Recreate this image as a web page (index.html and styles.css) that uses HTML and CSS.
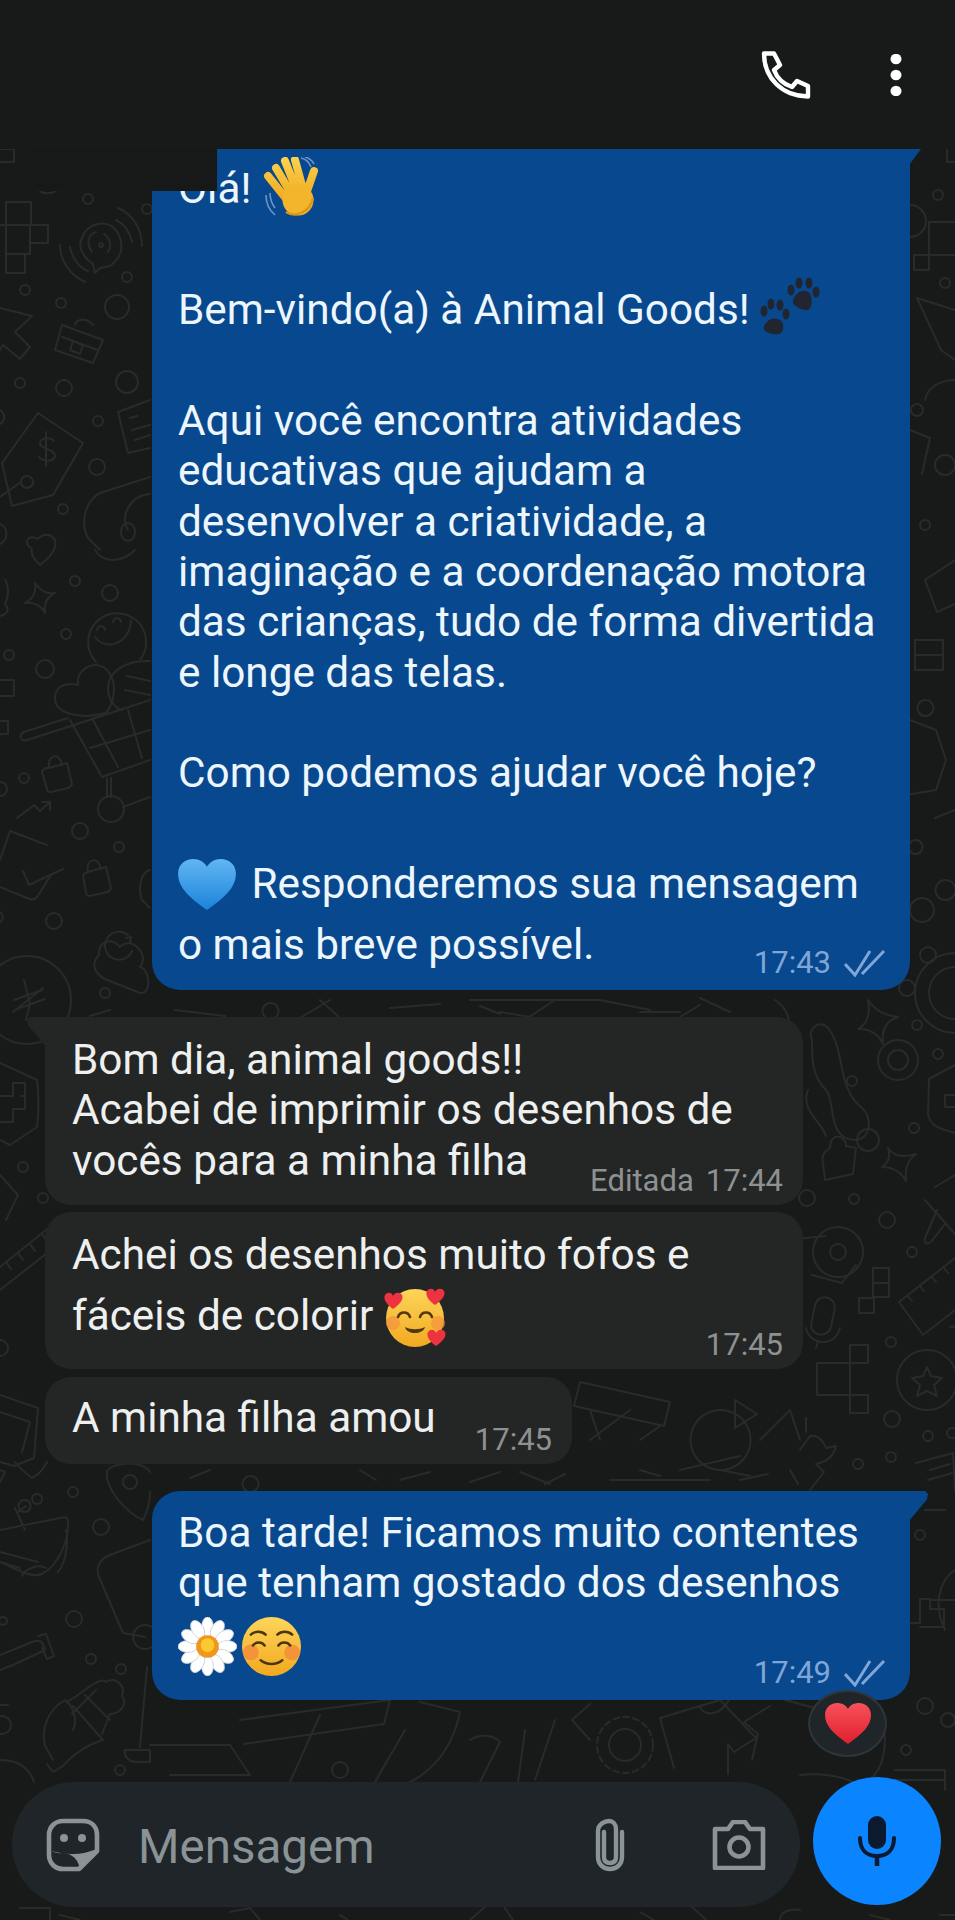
FILE: index.html
```html
<!DOCTYPE html>
<html lang="pt">
<head>
  <meta charset="UTF-8">
  <meta name="viewport" content="width=device-width, initial-scale=1.0">
  <title>Animal Goods</title>
  <link rel="stylesheet" href="styles.css">
</head>
<body>
  <header class="topbar">
    <svg class="top-icon" width="50" height="48" viewBox="0 0 50 48" aria-hidden="true"><path d="M3 2.500 L13 2.500 L19 14 L13 19 C16 27 22 33 31 36 L36 30 L47 35 L47 45.500 C21 45 3 27 3 2.500 Z" fill="none" stroke="#fff" stroke-width="4.400" stroke-linejoin="round"/></svg>
    <svg class="top-icon" width="12" height="42" viewBox="0 0 12 42" aria-hidden="true"><ellipse cx="6" cy="5" rx="5.500" ry="5.200"/><ellipse cx="6" cy="21" rx="5.500" ry="5.200"/><ellipse cx="6" cy="37" rx="5.500" ry="5.200"/></svg>
  </header>

  <main class="chat">
    <!-- doodle wallpaper, coordinates are page coordinates -->
    <svg class="wallpaper" width="955" height="1771" viewBox="0 149 955 1771" aria-hidden="true">
      <g fill="none" stroke="#292b2b" stroke-width="2" stroke-linecap="round" stroke-linejoin="round">
        <!-- left margin, top -->
        <path d="M0 149h14v13h-14M947 149v13h8M40 191c3 3 12 3 16 0"/>
        <path d="M6 202h25v23h-25zM6 225h24v29h-24zM30 225h18v18h-18zM6 254h19v19h-19zM0 225h6"/>
        <circle cx="88" cy="199" r="5"/>
        <path d="M82 238c4-14 24-20 34-8c8 12 8 26-6 36l-10 2-5 5-2-9c-12-8-15-20-11-26zM92 252c-6-8-4-18 4-20M104 234c6 4 8 12 4 18"/>
        <circle cx="101" cy="245" r="2"/>
        <path d="M118 208c14 6 24 20 24 38M116 220c8 4 14 12 16 22M60 245c0 16 10 30 25 37M70 247c2 10 8 20 18 24"/>
        <circle cx="127" cy="277" r="5"/><circle cx="25" cy="290" r="5"/><circle cx="61" cy="303" r="5"/><circle cx="117" cy="307" r="12"/>
        <path d="M0 308l32 8-17 16 15 15-10 12-17-14-3 5"/>
        <path d="M62 325l41 15-10 23-38-13zM62 337l36 13M75 325c1-6 12-8 18 0"/>
        <path d="M73 341l10 4-3 9-10-4z"/>
        <circle cx="20" cy="383" r="5"/><circle cx="64" cy="388" r="8"/><circle cx="127" cy="382" r="11"/><circle cx="98" cy="421" r="5"/><circle cx="97" cy="467" r="8"/><circle cx="63" cy="509" r="5"/><circle cx="147" cy="209" r="5"/>
        <path d="M0 410a8 8 0 0 1 0 14M150 400l-32 12 10 41 22-5M130 418l7-2M132 430l18-5M135 440l15-5"/>
        <path d="M38 413l45 30-30 52-41 11-10-43z"/>
        <path d="M54 441c-3-4-13-4-14 2c0 7 15 5 15 13c-1 6-12 6-16 1M46 432v34"/>
        <circle cx="27" cy="482" r="6"/>
        <path d="M0 497l21-15M150 477l-50 16c-15 8-20 30-12 45l12 12M150 494c-22 2-30 24-22 36"/>
        <ellipse cx="128" cy="532" rx="7" ry="9"/>
        <path d="M0 524a11 11 0 0 1 0 20M32 549c-10-6-3-16 6-10c6-8 20-4 17 8c-2 8-10 14-15 18c-4-4-10-10-8-16zM135 550c-10 10-30 16-40 0"/>
        <!-- left margin, middle -->
        <path d="M35 583q8 12 20 10q-12 6-10 20q-6-12-20-10q12-6 10-20z"/>
        <circle cx="75" cy="581" r="5"/><circle cx="110" cy="593" r="8"/><circle cx="66" cy="634" r="5"/><circle cx="9" cy="655" r="5"/><circle cx="45" cy="669" r="9"/>
        <path d="M5 580c4 6 4 16 0 24c4 4 4 10-5 12M0 680h14v16h-14M0 721h8v13h-8"/>
        <path d="M96 662A29 29 0 1 1 140 660M97 630c1-5 7-5 8 0M113 622c1-5 7-5 8 0M95 637c10 14 35 8 36-17"/>
        <path d="M107 712C85 720 55 715 55 698C55 686 66 682 78 685C76 670 92 660 105 668C115 676 118 695 107 712z"/>
        <path d="M150 661C125 660 108 672 108 688C108 700 115 708 122 710M127 676L150 681M125 690L150 695"/>
        <path d="M68 718l-44 14c-6 3-3 10 3 8l44-14 79-26M70 720l32 57 48-17M93 720l25 47M128 710l14 48M90 748l60-18M107 778v19M111 778v19M123 807l27-10"/>
        <circle cx="111" cy="809" r="13"/>
        <path d="M49 768l18-5 5 21c0 2-2 3-4 4l-17 4c-3 0-4-1-4-3l-5-17c0-2 2-3 4-4zM49 768c-2-14 11-16 13-3"/>
        <circle cx="24" cy="778" r="5"/>
        <path d="M17 818l17-13 6 6 10-9M42 802h8v8M0 782a7 7 0 0 1 0 14"/>
        <circle cx="80" cy="831" r="8"/><circle cx="119" cy="847" r="5"/>
        <path d="M10 831l37 14M0 860l10-29M23 871l6 14 34-16M51 875l-14 22c-2 3-6 3-10 1l-27-11"/>
        <path d="M88 872l18-5 5 21c0 2-2 3-4 4l-17 4c-3 0-4-1-4-3l-3-17c0-2 2-3 5-4zM88 872c-3-14 11-16 13-3"/>
        <circle cx="54" cy="921" r="8"/>
        <path d="M0 912a6 6 0 0 1 0 10M99 955c-10 10-2 20 6 24l35 14c12 2 10-24 0-26c10-12-8-32-20-20c-8-10-22-6-21 8zM128 935a14 14 0 1 0 4 16M126 938l5-1-1 6"/>
        <path d="M150 870c-10 2-12 20-8 30l8 8"/>
        <circle cx="27" cy="1000" r="44"/><circle cx="105" cy="993" r="5"/>
        <path d="M24 980l6 24-4 16M43 988l-30 24M14 1000l28-10M17 1009l28-10"/>
        <path d="M0 1063l37 17c2 16 2 30 0 47l-27 18-10-5M0 1096h13v-13h12v13h-4M25 1096v13h-12v13h-13"/>
        <circle cx="23" cy="1167" r="5"/><circle cx="43" cy="1198" r="5"/>
        <path d="M0 1175l18 20-12 25M0 1267l67-54M6 1262l5 7M18 1253l5 7M30 1244l5 7M42 1234l5 7M0 1290l70-55"/>
        <!-- left margin, lower -->
        <path d="M0 1340a8 8 0 0 1 8 8c0 5-4 8-8 8M0 1395l38 13-4 50-20 8-14-4M0 1412l30 10-8 30"/>
        <path d="M0 1470l5 2-5 10M15 1462c4 6 12 12 17 16c8-4 12-10 15-16"/>
        <circle cx="73" cy="1492" r="5"/><circle cx="37" cy="1499" r="5"/><circle cx="101" cy="1527" r="8"/><circle cx="74" cy="1619" r="8"/><circle cx="91" cy="1659" r="5"/><circle cx="121" cy="1669" r="5"/><circle cx="130" cy="1482" r="7"/><circle cx="3" cy="1621" r="4"/><circle cx="2" cy="1725" r="9"/>
        <path d="M107 1472c0-8 34-14 43 0M107 1472c-2 16 18 40 36 48c5-10 7-20 7-28"/>
        <path d="M0 1530l60-12c8-2 8 0 8 8c0 15-10 40-26 48c-10 4-20-2-42-12M0 1552l38 10M0 1562l20 6M15 1508l10 22M18 1512l8-6M24 1500a6 6 0 1 0 1 0M68 1530h-2c2 6 2 30-8 42M22 1576c3-8 18-12 24-8"/>
        <path d="M150 1540l-40 15c-10 4-15 12-11 22l24 56 22 4"/>
        <circle cx="145" cy="1637" r="12"/>
        <path d="M0 1655l32-13c5-2 9-2 11 2l2 6-32 15-13 5M38 1636l8-2 8 22-7 3-5-11"/>
        <path d="M65 1700c6 4 14 18 8 30M65 1700c-18 10-24 30-20 46l8 14M73 1706l30 34c-14 4-30 14-40 26l-10 6-6-8M66 1702c12-4 34-28 40-20c10-6 20 4 16 14c6 8-2 18-12 18l-8 20M85 1695l25 25M96 1690l-24 24"/>
        <path d="M147 1667l-7 80M125 1750h25v12h-12c-8 0-14-4-13-12"/>
        <path d="M0 1760c20 0 30 10 34 22M0 1705h8"/>
        <!-- right margin, top -->
        <circle cx="938" cy="195" r="5"/><circle cx="945" cy="283" r="5"/>
        <path d="M910 205a16 16 0 0 1 0 32M955 222h-26v33h-15v15h15v-15h26M917 298l38 12M917 298l24 52 14 10"/>
        <circle cx="917" cy="410" r="6"/><circle cx="945" cy="465" r="10"/><circle cx="925" cy="525" r="5"/>
        <path d="M955 380c-16 0-28 8-30 20M910 430l20 8-8 36M955 560l-30 20 12 32 18-8M915 640h28v30h-28zM915 655h28M925 700a8 8 0 1 0 1 0"/>
        <path d="M910 720l26 10 10 30-10 30-36 6M955 810l-20 8M915 840a7 7 0 1 0 1 0M945 880a10 10 0 1 0 1 0"/>
        <circle cx="922" cy="910" r="12"/><circle cx="928" cy="955" r="8"/><circle cx="955" cy="993" r="40"/><circle cx="955" cy="993" r="26"/><circle cx="907" cy="988" r="8"/><circle cx="917" cy="1025" r="5"/><circle cx="938" cy="1054" r="5"/><circle cx="852" cy="1081" r="5"/><circle cx="868" cy="1140" r="11"/><circle cx="914" cy="1128" r="5"/><circle cx="854" cy="1199" r="5"/><circle cx="807" cy="1198" r="8"/><circle cx="887" cy="1220" r="8"/><circle cx="912" cy="1252" r="5"/><circle cx="898" cy="1060" r="20"/><circle cx="898" cy="1060" r="10"/><circle cx="838" cy="1252" r="25"/><circle cx="838" cy="1252" r="8"/>
        <path d="M868 1000q10 15 30 17q-18 6-15 27q-8-16-25-15q14-8 10-29z"/>
        <path d="M888 1148q8 12 28 6q-12 8-10 27q-8-14-24-14q10-6 6-19zM955 1065l-26 14-1 36c4 14 16 14 27 18M955 1095h-10v12h10"/>
        <path d="M812 1040c-6-10 8-22 16-12c18 22 8 60 34 80c10 8 10 30-6 32c-30 0-20-40-30-50c-14-14-14-30-14-50M808 1090c-8 20 14 32 18 46"/>
        <path d="M823 1163c-2-10 3-12 7-15c0-16 16-14 16-2l10 2-3 26-28 6z"/>
        <path d="M955 1175l-20 12M937 1210l-12 28c-2 6 3 6 6 4l14-18M925 1200l30 34"/>
        <path d="M785 1240l40-4M812 1275l30 8 14-18"/>
        <path d="M873 1268h16v15h-16zM873 1283h16v14h-16zM859 1298h15v15h-15z"/>
        <path d="M899 1302l56-44M899 1302l24 33 32-25M908 1296l4 5M920 1286l4 5M932 1277l4 5M944 1268l4 5"/>
        <rect x="813" y="1297" width="20" height="38" rx="10" transform="rotate(12 823 1316)"/>
        <path d="M806 1328c2 10 10 14 18 14c8 0 14-6 16-14M818 1342l-2 6"/>
        <circle cx="891" cy="1342" r="5"/><circle cx="927" cy="1380" r="30"/>
        <path d="M927 1367l4 9 11 2-8 7 3 11-10-5-10 5 3-11-8-7 11-2z"/>
        <path d="M850 1345h18v18h-18zM817 1363h33v32h-33zM850 1395h18v18h-18zM950 1327a7 7 0 0 1 5 0"/>
        <circle cx="892" cy="1419" r="8"/><circle cx="928" cy="1436" r="5"/><circle cx="891" cy="1457" r="5"/><circle cx="858" cy="1464" r="5"/><circle cx="952" cy="1433" r="5"/>
        <path d="M800 1450l10-14c8-2 14 6 16 12l10-2c-2 10-10 16-20 18l8 8-14 18M806 1432l0-14M916 1463l37-10 2 38M930 1470l20-6M928 1480l24-7"/>
        <!-- between bubbles and below -->
        <path d="M470 1000l130 0M480 1006l20 8M600 1000l50 10M640 1012h40M700 998l30 14M775 1000c6 4 12 10 14 20M555 1000l-26 17M700 1005l-20 12M270 1003a8 8 0 1 0 1 0M500 1012l30 5"/>
        <path d="M175 1010l50 6M330 1000l-30 18M320 1000l20 18M110 1010l-20 6M390 1008l50-4"/>
        <path d="M580 1382l90 20-6 24-90-20zM720 1410a30 30 0 1 0 1 0M735 1400l22 14-22 14zM590 1440l40-30M640 1440l20-14M680 1470l60-14M720 1470l30 6M760 1440l30-30 10 30M610 1480h100M600 1440l-10-30"/>
        <path d="M640 1470l20 6M400 1480l30-8M470 1482l30-10M520 1472l30 12M545 1484l20-10M360 1470l16 10M250 1476a8 8 0 1 0 1 0M190 1478l20-8M740 1480l28-6M790 1470l8 14"/>
        <path d="M925 1510l20 0M930 1600h25M920 1623h-10M920 1623v-24h10v10h14v18h-24M955 1570c-16 10-22 36-10 60"/>
        <circle cx="920" cy="1535" r="5"/><circle cx="925" cy="1706" r="8"/><circle cx="906" cy="1750" r="5"/><circle cx="948" cy="1720" r="7"/>
        <path d="M660 1718l60-18 36 38-22 14-6-8v30M660 1718l14 50M700 1706c2 10 20 12 30-8M770 1706l-26 16 14 12-6 26M785 1700l30 8M880 1712c10 30 4 60-14 70"/>
        <circle cx="625" cy="1745" r="16"/><circle cx="625" cy="1745" r="28" stroke-dasharray="6 4"/>
        <path d="M590 1704l-18 16 18 20M555 1720l-20 60M525 1730l-8 60M150 1745h80l20 30h-80M240 1720l150-20-6 24-140 20M420 1702l40 10c-6 30-22 56-50 70M470 1740c10-6 22-6 30 2l-20 40M405 1730l-30 52M320 1715l-30 67"/>
        <circle cx="340" cy="1770" r="8"/><circle cx="120" cy="1770" r="5"/>
        <path d="M800 1775c40-4 60 10 80 20M895 1770h50v20M895 1780h50M20 1908h30v12M60 1915l20 5M230 1912l20-4 10 12M340 1915l8 5M470 1920l16-14M640 1912l14 8M780 1920c0-8 10-12 20-10M870 1915l20 5M940 1915h15M505 1908l8 12M690 1905l16 15"/>
      </g>
    </svg>

    <div class="patch"></div>

    <div class="msg out first">
      <span class="tail"></span>
      <p class="line">Olá! <svg class="emoji wave" viewBox="0 0 58 60" aria-hidden="true"><defs><linearGradient id="skin" x1="0" y1="0" x2="0" y2="1"><stop offset="0" stop-color="#fdd04a"/><stop offset="1" stop-color="#eea71c"/></linearGradient></defs><path d="M5 19L25 44M13 11L29 38M22 4L34 34M32 3L40 32M40 46L51 14" stroke="url(#skin)" stroke-width="8" stroke-linecap="round" fill="none"/><circle cx="35" cy="43" r="15.500" fill="#f3b52c"/><path d="M23 55c10 6 24 0 27-14" stroke="#dc961a" stroke-width="2.500" fill="none"/><path d="M3 38c0 9 3 15 9 20M7 36c0 7 2 11 5 15M38 1c5 1 8 4 10 9M42 0c4 1 7 3 9 7" stroke="#6f94c8" stroke-width="1.600" fill="none"/></svg></p>
      <p class="line after-hi">Bem-vindo(a) à Animal Goods! <svg class="emoji paws" viewBox="0 0 60 58" aria-hidden="true"><g fill="#202530"><path d="M38 16c4-4 12-2 13 3c1 6 1 12-3 14c-5 1-13-3-15-7c-1-4 2-7 5-10z"/><ellipse cx="31" cy="13" rx="3.500" ry="5.500"/><ellipse cx="39" cy="6" rx="3.500" ry="5.500"/><ellipse cx="49" cy="6" rx="3.500" ry="5.500"/><ellipse cx="56" cy="15" rx="3.500" ry="5.500"/><path d="M8 44c4-4 13-3 15 3c1 6-1 9-4 10c-5 1-14-1-15-5c-1-3 2-6 4-8z"/><ellipse cx="4" cy="34" rx="3.500" ry="5.500"/><ellipse cx="11" cy="27" rx="3.500" ry="5.500"/><ellipse cx="20" cy="28" rx="3.500" ry="5.500"/><ellipse cx="26" cy="37" rx="3.500" ry="5.500"/></g></svg></p>
      <p class="line gap">Aqui você encontra atividades<br>educativas que ajudam a<br>desenvolver a criatividade, a<br>imaginação e a coordenação motora<br>das crianças, tudo de forma divertida<br>e longe das telas.</p>
      <p class="line blank">Como podemos ajudar você hoje?</p>
      <p class="line gap"><svg class="emoji heart-blue" viewBox="0 0 60 54" aria-hidden="true"><defs><linearGradient id="blue" x1="0" y1="0" x2="0" y2="1"><stop offset="0" stop-color="#62b6f2"/><stop offset="1" stop-color="#1a83dc"/></linearGradient></defs><path d="M30 53C12 40 0 30 0 15C0 6 7 0 16 0c6 0 11 3 14 8c3-5 8-8 14-8c9 0 16 6 16 15c0 15-12 25-30 38z" fill="url(#blue)"/></svg> Responderemos sua mensagem</p>
      <p class="line tall">o mais breve possível.</p>
      <span class="meta">17:43
        <svg class="ticks" width="42" height="28" viewBox="0 0 42 28" aria-hidden="true"><path d="M1 15l10 11L26 2M18 25L40 2" fill="none" stroke="#7fa6d6" stroke-width="3"/></svg>
      </span>
    </div>

    <div class="msg in first-in">
      <span class="tail"></span>
      <p class="line">Bom dia, animal goods!!<br>Acabei de imprimir os desenhos de<br>vocês para a minha filha</p>
      <span class="meta"><span class="edited">Editada</span>17:44</span>
    </div>

    <div class="msg in second">
      <p class="line">Achei os desenhos muito fofos e</p>
      <p class="line tall">fáceis de colorir <svg class="emoji hearts" viewBox="0 0 62 62" aria-hidden="true"><defs><linearGradient id="face" x1="0" y1="0" x2="0" y2="1"><stop offset="0" stop-color="#fdd55a"/><stop offset="1" stop-color="#f2a91f"/></linearGradient></defs><circle cx="31" cy="32" r="29" fill="url(#face)"/><circle cx="9" cy="37" r="7" fill="#f3913e" opacity=".7"/><circle cx="54" cy="37" r="7" fill="#f3913e" opacity=".7"/><path d="M14 31c2-6 10-6 12 0M36 31c2-6 10-6 12 0" stroke="#54390f" stroke-width="2.600" fill="none" stroke-linecap="round"/><path d="M21 41c6 3 14 3 20 0c-2 8-18 8-20 0z" fill="#54390f"/><g fill="#ee3340"><path d="M9 23C2 18-1 13 1 9c2-3 7-3 8 1c2-4 7-4 9-1c2 4-2 9-9 14z"/><path d="M51 19c-7-5-10-10-8-14c2-3 7-3 8 1c2-4 7-4 9-1c2 4-2 9-9 14z"/><path d="M52 60c-7-5-10-10-8-14c2-3 7-3 8 1c2-4 7-4 9-1c2 4-2 9-9 14z"/></g></svg></p>
      <span class="meta">17:45</span>
    </div>

    <div class="msg in third">
      <p class="line">A minha filha amou</p>
      <span class="meta">17:45</span>
    </div>

    <div class="msg out last">
      <span class="tail"></span>
      <p class="line">Boa tarde! Ficamos muito contentes<br>que tenham gostado dos desenhos</p>
      <p class="line emoji-row"><svg class="emoji daisy" viewBox="0 0 60 60" aria-hidden="true"><g fill="#fff" stroke="#c9ced6" stroke-width=".8"><ellipse cx="30" cy="10" rx="6" ry="10"/><ellipse cx="30" cy="10" rx="6" ry="10" transform="rotate(30 30 30)"/><ellipse cx="30" cy="10" rx="6" ry="10" transform="rotate(60 30 30)"/><ellipse cx="30" cy="10" rx="6" ry="10" transform="rotate(90 30 30)"/><ellipse cx="30" cy="10" rx="6" ry="10" transform="rotate(120 30 30)"/><ellipse cx="30" cy="10" rx="6" ry="10" transform="rotate(150 30 30)"/><ellipse cx="30" cy="10" rx="6" ry="10" transform="rotate(180 30 30)"/><ellipse cx="30" cy="10" rx="6" ry="10" transform="rotate(210 30 30)"/><ellipse cx="30" cy="10" rx="6" ry="10" transform="rotate(240 30 30)"/><ellipse cx="30" cy="10" rx="6" ry="10" transform="rotate(270 30 30)"/><ellipse cx="30" cy="10" rx="6" ry="10" transform="rotate(300 30 30)"/><ellipse cx="30" cy="10" rx="6" ry="10" transform="rotate(330 30 30)"/></g><circle cx="30" cy="30" r="11.500" fill="#f0961c"/><circle cx="30" cy="28.500" r="7" fill="#fcc92f"/></svg><svg class="emoji smile" viewBox="0 0 60 60" aria-hidden="true"><defs><linearGradient id="face2" x1="0" y1="0" x2="0" y2="1"><stop offset="0" stop-color="#fdd55a"/><stop offset="1" stop-color="#f2a91f"/></linearGradient></defs><circle cx="30" cy="30" r="30" fill="url(#face2)"/><circle cx="9" cy="36" r="8" fill="#f2873c" opacity=".75"/><circle cx="51" cy="36" r="8" fill="#f2873c" opacity=".75"/><path d="M9 18c4-4 11-4 15 0M36 18c4-4 11-4 15 0M11 29c3-4 9-4 12 0M37 29c3-4 9-4 12 0M19 44c6 5 16 5 22 0" stroke="#4e3510" stroke-width="2.600" fill="none" stroke-linecap="round"/></svg></p>
      <span class="meta">17:49
        <svg class="ticks" width="42" height="28" viewBox="0 0 42 28" aria-hidden="true"><path d="M1 15l10 11L26 2M18 25L40 2" fill="none" stroke="#7fa6d6" stroke-width="3"/></svg>
      </span>
      <span class="reaction"><svg width="46" height="42" viewBox="0 0 46 42" aria-hidden="true"><defs><linearGradient id="red" x1="0" y1="0" x2="0" y2="1"><stop offset="0" stop-color="#f8505a"/><stop offset="1" stop-color="#e0202e"/></linearGradient></defs><path d="M23 41C9 31 0 23 0 12C0 5 5 0 12 0c5 0 9 2 11 6c2-4 6-6 11-6c7 0 12 5 12 12c0 11-9 19-23 29z" fill="url(#red)"/></svg></span>
    </div>

    <footer class="composer">
      <div class="input-pill">
        <svg class="pill-icon" width="54" height="54" viewBox="0 0 54 54" aria-hidden="true"><path d="M17 3h20c9 0 14 6 14 14v16L33 51H17C9 51 3 45 3 37V17C3 9 9 3 17 3z" fill="none" stroke="#8a9396" stroke-width="4.600" stroke-linejoin="round"/><circle cx="18" cy="20" r="4" fill="#8a9396"/><circle cx="36" cy="20" r="4" fill="#8a9396"/><path d="M6 33c7 2 12 3 21 3c8 0 16-2 24-5l-3 8-14 12c-2-9-6-13-12-15c-5-1-12 0-16-3z" fill="#8a9396"/></svg>
        <span class="placeholder">Mensagem</span>
        <svg class="pill-icon clip" width="36" height="54" viewBox="0 0 36 54" aria-hidden="true"><path d="M12 14v25c0 4 2 6 6 6s6-2 6-6V11c0-5-3-8-7-8s-11 3-11 10v26c0 7 5 12 12 12s12-5 12-12V14" fill="none" stroke="#8a9396" stroke-width="4.400" stroke-linecap="round"/></svg>
        <svg class="pill-icon" width="54" height="50" viewBox="0 0 54 50" aria-hidden="true"><path d="M3 9h13l5-7h12l5 7h13v39H3z" fill="none" stroke="#8a9396" stroke-width="4.600" stroke-linejoin="round"/><circle cx="27" cy="27" r="9.500" fill="none" stroke="#8a9396" stroke-width="4.600"/></svg>
      </div>
      <button class="mic-btn" type="button" aria-label="Gravar">
        <svg width="38" height="50" viewBox="0 0 38 50" aria-hidden="true"><rect x="10" y="0" width="18" height="33" rx="9" fill="#0b1a2e"/><path d="M2 22c0 12 7 18 17 18s17-6 17-18" fill="none" stroke="#0b1a2e" stroke-width="4" stroke-linecap="round"/><path d="M19 38v12" stroke="#0b1a2e" stroke-width="4.500"/></svg>
      </button>
    </footer>
  </main>
</body>
</html>
```

FILE: styles.css
```css
* {
  box-sizing: border-box;
}

html, body {
  margin: 0;
  padding: 0;
}

body {
  width: 955px;
  height: 1920px;
  overflow: hidden;
  background-color: #171a19;
  color: #f2f6f7;
  font-family: Roboto, "Liberation Sans", sans-serif;
  font-size: 42.3px;
}

p {
  margin: 0;
}

/* top bar */
.topbar {
  height: 149px;
  background-color: #171a19;
  display: flex;
  justify-content: flex-end;
  align-items: center;
  gap: 79px;
  padding: 0 53px 0 0;
}

.top-icon {
  fill: #fff;
}

.chat {
  position: relative;
  height: 1771px;
  display: flex;
  flex-direction: column;
}

.wallpaper {
  position: absolute;
  left: 0;
  top: 0;
}

.patch {
  position: absolute;
  left: 31px;
  top: 0;
  width: 186px;
  height: 42px;
  background-color: #161918;
  z-index: 2;
}

/* bubbles */
.msg {
  position: relative;
  line-height: 50.4px;
}

.msg.out {
  align-self: flex-start;
  margin-left: 152px;
  width: 758px;
  padding-left: 26px;
  padding-right: 20px;
  background-color: #08488e;
  border-radius: 0 0 28px 28px;
  color: #ecf6fc;
}

.msg.in {
  align-self: flex-start;
  margin-left: 45px;
  padding-left: 27px;
  background-color: #242626;
  border-radius: 26px;
  color: #eef0f0;
}

.msg .tail {
  position: absolute;
  top: 0;
}

.first .tail {
  left: 100%;
  margin-left: -1px;
  width: 12px;
  height: 16px;
  background-color: #08488e;
  clip-path: polygon(0 0, 100% 0, 0 100%);
}

.last .tail {
  left: 100%;
  margin-left: -1px;
  width: 19px;
  height: 30px;
  background-color: #08488e;
  clip-path: polygon(0 0, 86% 0, 100% 10%, 94% 28%, 0 100%);
}

.msg.in .tail {
  right: 100%;
  margin-right: -1px;
  width: 19px;
  height: 30px;
  background-color: #242626;
  clip-path: polygon(14% 0, 100% 0, 100% 100%, 6% 28%, 0 10%);
}

.line.gap {
  margin-top: 60.6px;
}

.line.blank {
  margin-top: 50px;
}

.line.tall {
  margin-top: 10.6px;
}

.line.after-hi {
  margin-top: 70.6px;
}

.line.emoji-row {
  margin-top: 12px;
}

.first {
  height: 841px;
  padding-top: 14.8px;
}

.emoji {
  display: inline-block;
  vertical-align: middle;
  margin-top: -14px;
  margin-bottom: -10px;
}

.wave {
  width: 58px;
  height: 60px;
  margin-left: 1px;
  margin-top: -20px;
}

.paws {
  width: 60px;
  height: 58px;
  margin-top: -24px;
}

.heart-blue {
  width: 58px;
  height: 52px;
  margin-right: 5px;
}

.hearts {
  width: 62px;
  height: 62px;
}

.daisy, .smile {
  width: 59px;
  height: 59px;
  margin-right: 5px;
}

.meta {
  position: absolute;
  right: 24px;
  bottom: 9px;
  display: flex;
  align-items: center;
  gap: 13px;
  font-size: 31px;
  line-height: 36px;
  white-space: nowrap;
  color: #8e9191;
}

.out .meta {
  color: #7fa6d6;
}

.in .meta {
  right: 20px;
  bottom: 6.5px;
}

.edited {
  margin-right: -1px;
}

.first-in {
  margin-top: 27px;
  width: 758px;
  height: 188px;
  padding-top: 17.8px;
  border-top-left-radius: 0 !important;
}

.second {
  margin-top: 7px;
  width: 758px;
  height: 157px;
  padding-top: 17.8px;
}

.third {
  margin-top: 8px;
  width: 527px;
  height: 87px;
  padding-top: 16.4px;
}

.last {
  margin-top: 27px;
  height: 209px;
  padding-top: 16.5px;
}

.msg.last {
  border-top-left-radius: 28px;
}

.reaction {
  position: absolute;
  right: 23px;
  bottom: -57px;
  width: 79px;
  height: 67px;
  border-radius: 50%;
  background-color: #1f2528;
  border: 2px solid #2f3538;
  display: flex;
  align-items: center;
  justify-content: center;
}

/* composer */
.composer {
  position: absolute;
  left: 12px;
  right: 14px;
  bottom: 13px;
  display: flex;
  align-items: flex-end;
  justify-content: space-between;
}

.input-pill {
  width: 788px;
  height: 125px;
  background-color: #1f2528;
  border-radius: 62px;
  display: flex;
  align-items: center;
  padding: 0 34px;
}

.placeholder {
  flex: 1;
  margin-left: 38px;
  padding-top: 4px;
  font-size: 47.5px;
  color: #8a9396;
}

.clip {
  margin-right: 84px;
}

.mic-btn {
  width: 128px;
  height: 128px;
  margin-bottom: 2px;
  border: none;
  padding: 0;
  border-radius: 50%;
  background-color: #0a84ff;
  display: flex;
  align-items: center;
  justify-content: center;
}
```
